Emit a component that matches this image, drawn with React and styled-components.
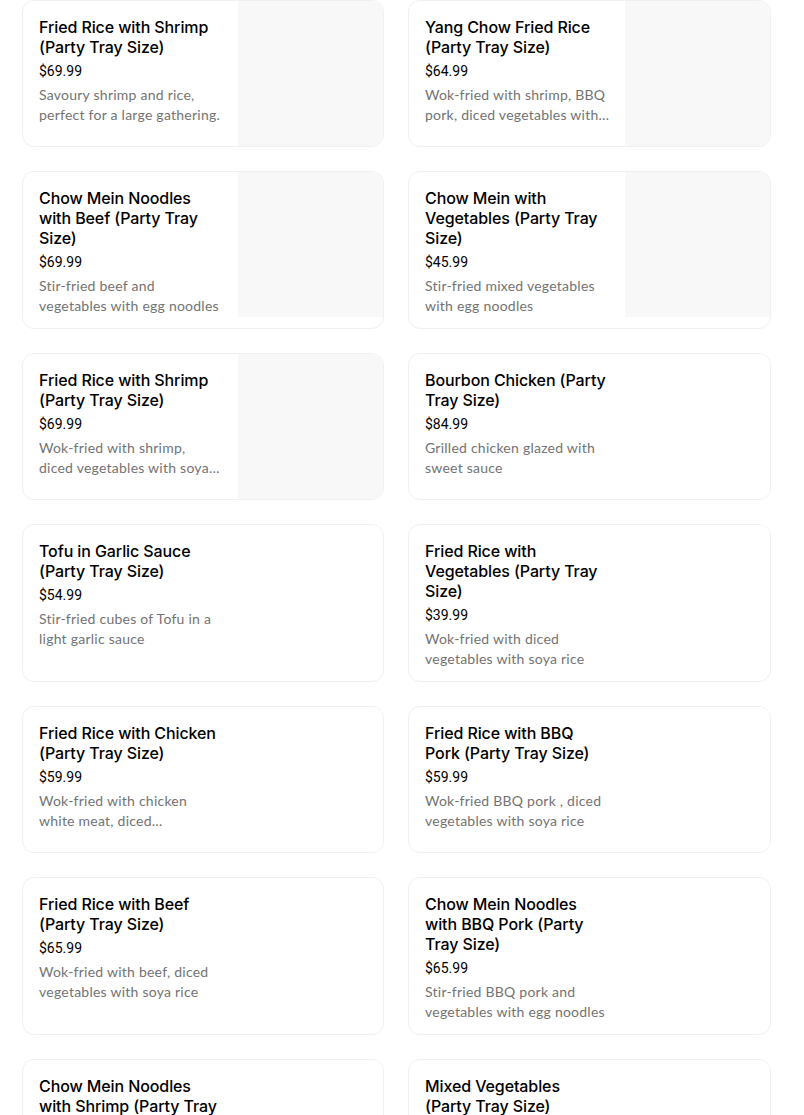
import React from 'react';
import styled, { createGlobalStyle } from 'styled-components';

const GlobalStyle = createGlobalStyle`
  html, body {
    margin: 0;
    padding: 0;
    background: #ffffff;
  }
  body {
    font-family: Roboto, "Liberation Sans", sans-serif;
    color: #000000;
  }
`;

const Grid = styled.div`
  display: grid;
  grid-template-columns: 362px 363px;
  column-gap: 24px;
  row-gap: 24px;
  padding-left: 22px;
  width: 749px;
`;

const Card = styled.div`
  display: flex;
  align-items: flex-start;
  min-height: 145px;
  border: 1px solid #f0f0f0;
  border-radius: 12px;
  overflow: hidden;
  background: #ffffff;
`;

const Info = styled.div`
  flex: 1;
  min-width: 0;
  padding: 16px 16px 12px 16px;
  display: flex;
  flex-direction: column;
`;

const Title = styled.div`
  font-family: Inter, Roboto, sans-serif;
  font-size: 16px;
  line-height: 20px;
  font-weight: 500;
  color: #000000;
  letter-spacing: -0.1px;
`;

const Price = styled.div`
  margin-top: 4px;
  font-size: 14px;
  line-height: 20px;
  color: #000000;
`;

const Description = styled.div`
  margin-top: 4px;
  font-family: Lato, Roboto, sans-serif;
  font-size: 14px;
  line-height: 20px;
  font-weight: 400;
  letter-spacing: 0.24px;
  color: #737373;
  display: -webkit-box;
  -webkit-line-clamp: 2;
  -webkit-box-orient: vertical;
  overflow: hidden;
`;

const Thumb = styled.div`
  flex: 0 0 145px;
  width: 145px;
  height: 145px;
  background: ${(p) => (p.$empty ? '#ffffff' : '#f8f8f8')};
`;

const items = [
  { title: 'Fried Rice with Shrimp (Party Tray Size)', price: '$69.99', desc: 'Savoury shrimp and rice, perfect for a large gathering.', image: true },
  { title: 'Yang Chow Fried Rice (Party Tray Size)', price: '$64.99', desc: 'Wok-fried with shrimp, BBQ pork, diced vegetables with soya rice', image: true },
  { title: 'Chow Mein Noodles with Beef (Party Tray Size)', price: '$69.99', desc: 'Stir-fried beef and vegetables with egg noodles', image: true },
  { title: 'Chow Mein with Vegetables (Party Tray Size)', price: '$45.99', desc: 'Stir-fried mixed vegetables with egg noodles', image: true },
  { title: 'Fried Rice with Shrimp (Party Tray Size)', price: '$69.99', desc: 'Wok-fried with shrimp, diced vegetables with soya rice', image: true },
  { title: 'Bourbon Chicken (Party Tray Size)', price: '$84.99', desc: 'Grilled chicken glazed with sweet sauce' },
  { title: 'Tofu in Garlic Sauce (Party Tray Size)', price: '$54.99', desc: 'Stir-fried cubes of Tofu in a light garlic sauce' },
  { title: 'Fried Rice with Vegetables (Party Tray Size)', price: '$39.99', desc: 'Wok-fried with diced vegetables with soya rice' },
  { title: 'Fried Rice with Chicken (Party Tray Size)', price: '$59.99', desc: 'Wok-fried with chicken white meat, diced vegetables with soya rice' },
  { title: 'Fried Rice with BBQ Pork (Party Tray Size)', price: '$59.99', desc: 'Wok-fried BBQ pork , diced vegetables with soya rice' },
  { title: 'Fried Rice with Beef (Party Tray Size)', price: '$65.99', desc: 'Wok-fried with beef, diced vegetables with soya rice' },
  { title: 'Chow Mein Noodles with BBQ Pork (Party Tray Size)', price: '$65.99', desc: 'Stir-fried BBQ pork and vegetables with egg noodles' },
  { title: 'Chow Mein Noodles with Shrimp (Party Tray Size)', price: '$69.99', desc: 'Stir-fried shrimp and vegetables with egg noodles' },
  { title: 'Mixed Vegetables (Party Tray Size)', price: '$45.99', desc: 'Stir-fried mixed vegetables in a light sauce' },
];

const MenuCard = ({ item }) => (
  <Card>
    <Info>
      <Title>{item.title}</Title>
      <Price>{item.price}</Price>
      <Description>{item.desc}</Description>
    </Info>
    <Thumb $empty={!item.image} />
  </Card>
);

const App = () => (
  <>
    <GlobalStyle />
    <Grid>
      {items.map((item, i) => (
        <MenuCard key={i} item={item} />
      ))}
    </Grid>
  </>
);

export default App;
